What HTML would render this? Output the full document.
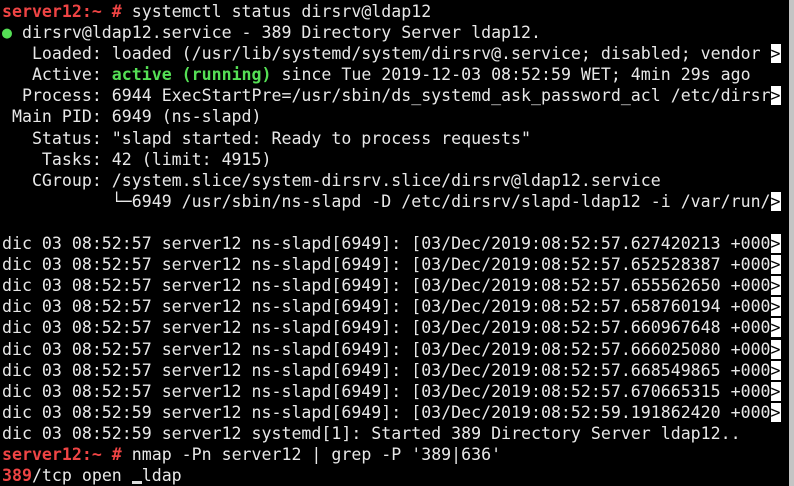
<!DOCTYPE html>
<html><head><meta charset="utf-8"><style>
html,body{margin:0;padding:0;background:#000;width:794px;height:486px;overflow:hidden}
pre{position:absolute;left:2px;top:1px;margin:0;font-family:"DejaVu Sans Mono","Liberation Mono",monospace;font-size:16.58px;line-height:21.1px;color:#e8e8e8;white-space:pre}
.r{color:#ef4444;font-weight:bold}
.g{color:#55e055;font-weight:bold}
.i{background:#fff;color:#000}
.sb{position:absolute;left:789px;top:0;width:5px;height:486px;background:#c4c4c4}
.cur{position:absolute;left:132px;top:481px;width:10px;height:3px;background:#ddd}
</style></head><body>
<pre><span class="r">server12:~ #</span> systemctl status dirsrv@ldap12
<span class="g">●</span> dirsrv@ldap12.service - 389 Directory Server ldap12.
   Loaded: loaded (/usr/lib/systemd/system/dirsrv@.service; disabled; vendor <span class="i">&gt;</span>
   Active: <span class="g">active (running)</span> since Tue 2019-12-03 08:52:59 WET; 4min 29s ago
  Process: 6944 ExecStartPre=/usr/sbin/ds_systemd_ask_password_acl /etc/dirsr<span class="i">&gt;</span>
 Main PID: 6949 (ns-slapd)
   Status: "slapd started: Ready to process requests"
    Tasks: 42 (limit: 4915)
   CGroup: /system.slice/system-dirsrv.slice/dirsrv@ldap12.service
           └─6949 /usr/sbin/ns-slapd -D /etc/dirsrv/slapd-ldap12 -i /var/run/<span class="i">&gt;</span>

dic 03 08:52:57 server12 ns-slapd[6949]: [03/Dec/2019:08:52:57.627420213 +000<span class="i">&gt;</span>
dic 03 08:52:57 server12 ns-slapd[6949]: [03/Dec/2019:08:52:57.652528387 +000<span class="i">&gt;</span>
dic 03 08:52:57 server12 ns-slapd[6949]: [03/Dec/2019:08:52:57.655562650 +000<span class="i">&gt;</span>
dic 03 08:52:57 server12 ns-slapd[6949]: [03/Dec/2019:08:52:57.658760194 +000<span class="i">&gt;</span>
dic 03 08:52:57 server12 ns-slapd[6949]: [03/Dec/2019:08:52:57.660967648 +000<span class="i">&gt;</span>
dic 03 08:52:57 server12 ns-slapd[6949]: [03/Dec/2019:08:52:57.666025080 +000<span class="i">&gt;</span>
dic 03 08:52:57 server12 ns-slapd[6949]: [03/Dec/2019:08:52:57.668549865 +000<span class="i">&gt;</span>
dic 03 08:52:57 server12 ns-slapd[6949]: [03/Dec/2019:08:52:57.670665315 +000<span class="i">&gt;</span>
dic 03 08:52:59 server12 ns-slapd[6949]: [03/Dec/2019:08:52:59.191862420 +000<span class="i">&gt;</span>
dic 03 08:52:59 server12 systemd[1]: Started 389 Directory Server ldap12..
<span class="r">server12:~ #</span> nmap -Pn server12 | grep -P '389|636'
<span class="r">389</span>/tcp open  ldap</pre>
<div class="cur"></div>
<div class="sb"></div>
</body></html>
